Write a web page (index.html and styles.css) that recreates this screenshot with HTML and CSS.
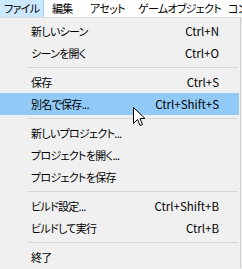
FILE: index.html
```html
<!DOCTYPE html>
<html>
<head>
    <title>ファイルメニュー</title>
    <link rel="stylesheet" href="styles.css">
</head>
<body>
    <div class="menubar">
        <span class="bar-item first active">ファイル</span>
        <span class="bar-item w38">編集</span>
        <span class="bar-item w48">アセット</span>
        <span class="bar-item w90">ゲームオブジェクト</span>
        <span class="bar-item">コンポーネント</span>
    </div>

    <div class="menu">
        <div class="item"><span class="label">新しいシーン</span><span class="key">Ctrl+N</span></div>
        <div class="item"><span class="label">シーンを開く</span><span class="key">Ctrl+O</span></div>
        <div class="sep"></div>
        <div class="item"><span class="label">保存</span><span class="key">Ctrl+S</span></div>
        <div class="item hover"><span class="label">別名で保存...</span><span class="key">Ctrl+Shift+S</span></div>
        <div class="sep"></div>
        <div class="item"><span class="label">新しいプロジェクト...</span></div>
        <div class="item"><span class="label">プロジェクトを開く...</span></div>
        <div class="item"><span class="label">プロジェクトを保存</span></div>
        <div class="sep"></div>
        <div class="item"><span class="label">ビルド設定...</span><span class="key">Ctrl+Shift+B</span></div>
        <div class="item"><span class="label">ビルドして実行</span><span class="key">Ctrl+B</span></div>
        <div class="sep"></div>
        <div class="item"><span class="label">終了</span></div>
    </div>

    <!-- マウスカーソル -->
    <svg class="cursor" width="13" height="20" viewBox="0 0 13 20">
        <path d="M0.5 0.5 L0.5 16.5 L4.5 12.5 L7 18.5 L9.5 17.5 L7 11.5 L12 11.5 Z" fill="#fff" stroke="#000" stroke-width="1"/>
    </svg>
</body>
</html>
```

FILE: styles.css
```css
body {
    margin: 0;
    width: 242px;
    height: 269px;
    overflow: hidden;
    background-color: #f0f0f0;
    font-family: "Noto Sans CJK JP", sans-serif;
    font-size: 12px;
    color: #000;
    position: relative;
}

.menubar {
    display: flex;
    height: 17px;
    background-color: #fff;
    border-bottom: 1px solid #dadada;
    white-space: nowrap;
    overflow: hidden;
}

/* 日本語は細めに詰める */
.bar-item, .label {
    font-size: 11px;
    letter-spacing: -0.7px;
    font-feature-settings: "palt";
}

.bar-item {
    flex: none;
    box-sizing: border-box;
    padding-left: 8px;
    line-height: 17px;
}

.bar-item.first {
    width: 44px;
    padding-left: 4px;
}

.bar-item.active {
    background-color: #cce8ff;
    border-right: 1px solid #99d1ff;
}

.w38 { width: 38px; }
.w48 { width: 48px; }
.w90 { width: 90px; }

.menu {
    padding-top: 2px;
    border-right: 1px solid #cfcfcf;
    width: 241px;
    box-sizing: border-box;
}

.item {
    display: flex;
    justify-content: space-between;
    align-items: center;
    height: 22px;
    margin-right: 1px;
    padding: 0 20px 0 31px;
    white-space: nowrap;
}

.key {
    font-size: 11.5px;
}

.item.hover {
    background-color: #91c9f7;
}

.sep {
    height: 1px;
    margin: 3px 2px 3px 27px;
    background-color: #d7d7d7;
}

.cursor {
    position: absolute;
    left: 133px;
    top: 107px;
}
```
